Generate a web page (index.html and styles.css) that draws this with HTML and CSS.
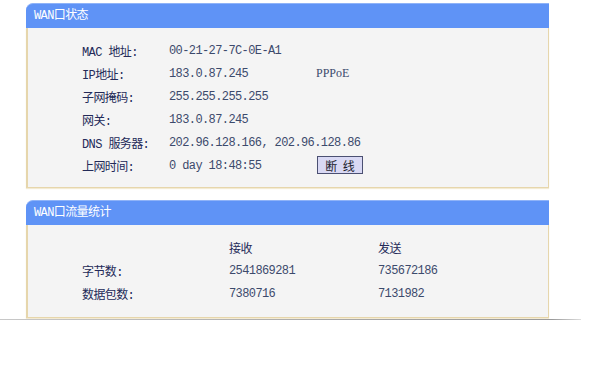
FILE: index.html
```html
<!DOCTYPE html>
<html>

    <head>
        <title>WAN口状态</title>
        <link rel="stylesheet" href="styles.css">
    </head>

    <body>
        <div class="panel first">
            <div class="panel-head">WAN口状态</div>
            <div class="panel-body">
                <table class="info">
                    <tr>
                        <td class="label">MAC 地址:</td>
                        <td class="value">00-21-27-7C-0E-A1</td>
                        <td></td>
                    </tr>
                    <tr>
                        <td class="label">IP地址:</td>
                        <td class="value">183.0.87.245</td>
                        <td class="proto">PPPoE</td>
                    </tr>
                    <tr>
                        <td class="label">子网掩码:</td>
                        <td class="value">255.255.255.255</td>
                        <td></td>
                    </tr>
                    <tr>
                        <td class="label">网关:</td>
                        <td class="value">183.0.87.245</td>
                        <td></td>
                    </tr>
                    <tr>
                        <td class="label">DNS 服务器:</td>
                        <td class="value" colspan="2">202.96.128.166, 202.96.128.86</td>
                    </tr>
                    <tr>
                        <td class="label">上网时间:</td>
                        <td class="value">0 day 18:48:55</td>
                        <td><button class="btn">断&nbsp;&nbsp;线</button></td>
                    </tr>
                </table>
            </div>
        </div>

        <div class="panel second">
            <div class="panel-head">WAN口流量统计</div>
            <div class="panel-body">
                <table class="stats">
                    <tr>
                        <td class="label"></td>
                        <td class="label col">接收</td>
                        <td class="label">发送</td>
                    </tr>
                    <tr>
                        <td class="label">字节数:</td>
                        <td class="value col">2541869281</td>
                        <td class="value">735672186</td>
                    </tr>
                    <tr>
                        <td class="label">数据包数:</td>
                        <td class="value col">7380716</td>
                        <td class="value">7131982</td>
                    </tr>
                </table>
            </div>
        </div>

        <div class="rule"></div>
    </body>

</html>
```

FILE: styles.css
```css
body {
    margin: 0;
    padding: 0;
    background-color: white;
    font-family: "Liberation Mono", "Noto Sans CJK SC", monospace;
    font-size: 12px;
    letter-spacing: -0.6px;
}

.panel {
    width: 523px;
    margin-left: 26px;
}

.panel.first {
    margin-top: 3px;
}

.panel.second {
    margin-top: 12px;
}

.panel-head {
    height: 24px;
    line-height: 24px;
    padding-left: 8px;
    background-color: #5f93f6;
    border-top: 1px solid #8fb3f8;
    border-top-left-radius: 7px;
    color: white;
    font-size: 12px;
}

.panel-body {
    background-color: #f4f4f4;
    border: 1px solid #e6d6ac;
    border-top: 0;
    border-left-width: 2px;
    box-shadow: 0 1px 1px #f3ead2;
}

.first .panel-body {
    padding: 11px 0 10px 0;
}

.second .panel-body {
    padding: 11px 0 12px 0;
}

table {
    border-collapse: collapse;
    margin-left: 54px;
}

td {
    height: 23px;
    padding: 0;
    white-space: nowrap;
}

.label {
    color: #232a58;
}

.value {
    color: #3c4a6c;
}

.info .label {
    width: 87px;
}

.info .value {
    width: 147px;
}

.proto {
    font-family: "Liberation Serif", serif;
    letter-spacing: 0;
    color: #3c4a6c;
}

.btn {
    height: 18px;
    width: 46px;
    padding: 0;
    margin-left: 1px;
    background-color: #d9d9f4;
    border: 1px solid #4b5072;
    color: #1c1c2c;
    font-family: "Noto Sans CJK SC", sans-serif;
    font-size: 12px;
    letter-spacing: 0;
    line-height: 15px;
}

.stats td {
    width: 147px;
}

.stats td:first-child {
    width: 147px;
}

.stats .col {
    width: 149px;
}

.rule {
    width: 581px;
    height: 1px;
    margin-top: 1px;
    background: linear-gradient(to right, #c8c8c8, #a8a8a8 60%, #9a9a9a 95%, #dddddd);
    box-shadow: 0 1px 1px #dcdcdc;
}
```
